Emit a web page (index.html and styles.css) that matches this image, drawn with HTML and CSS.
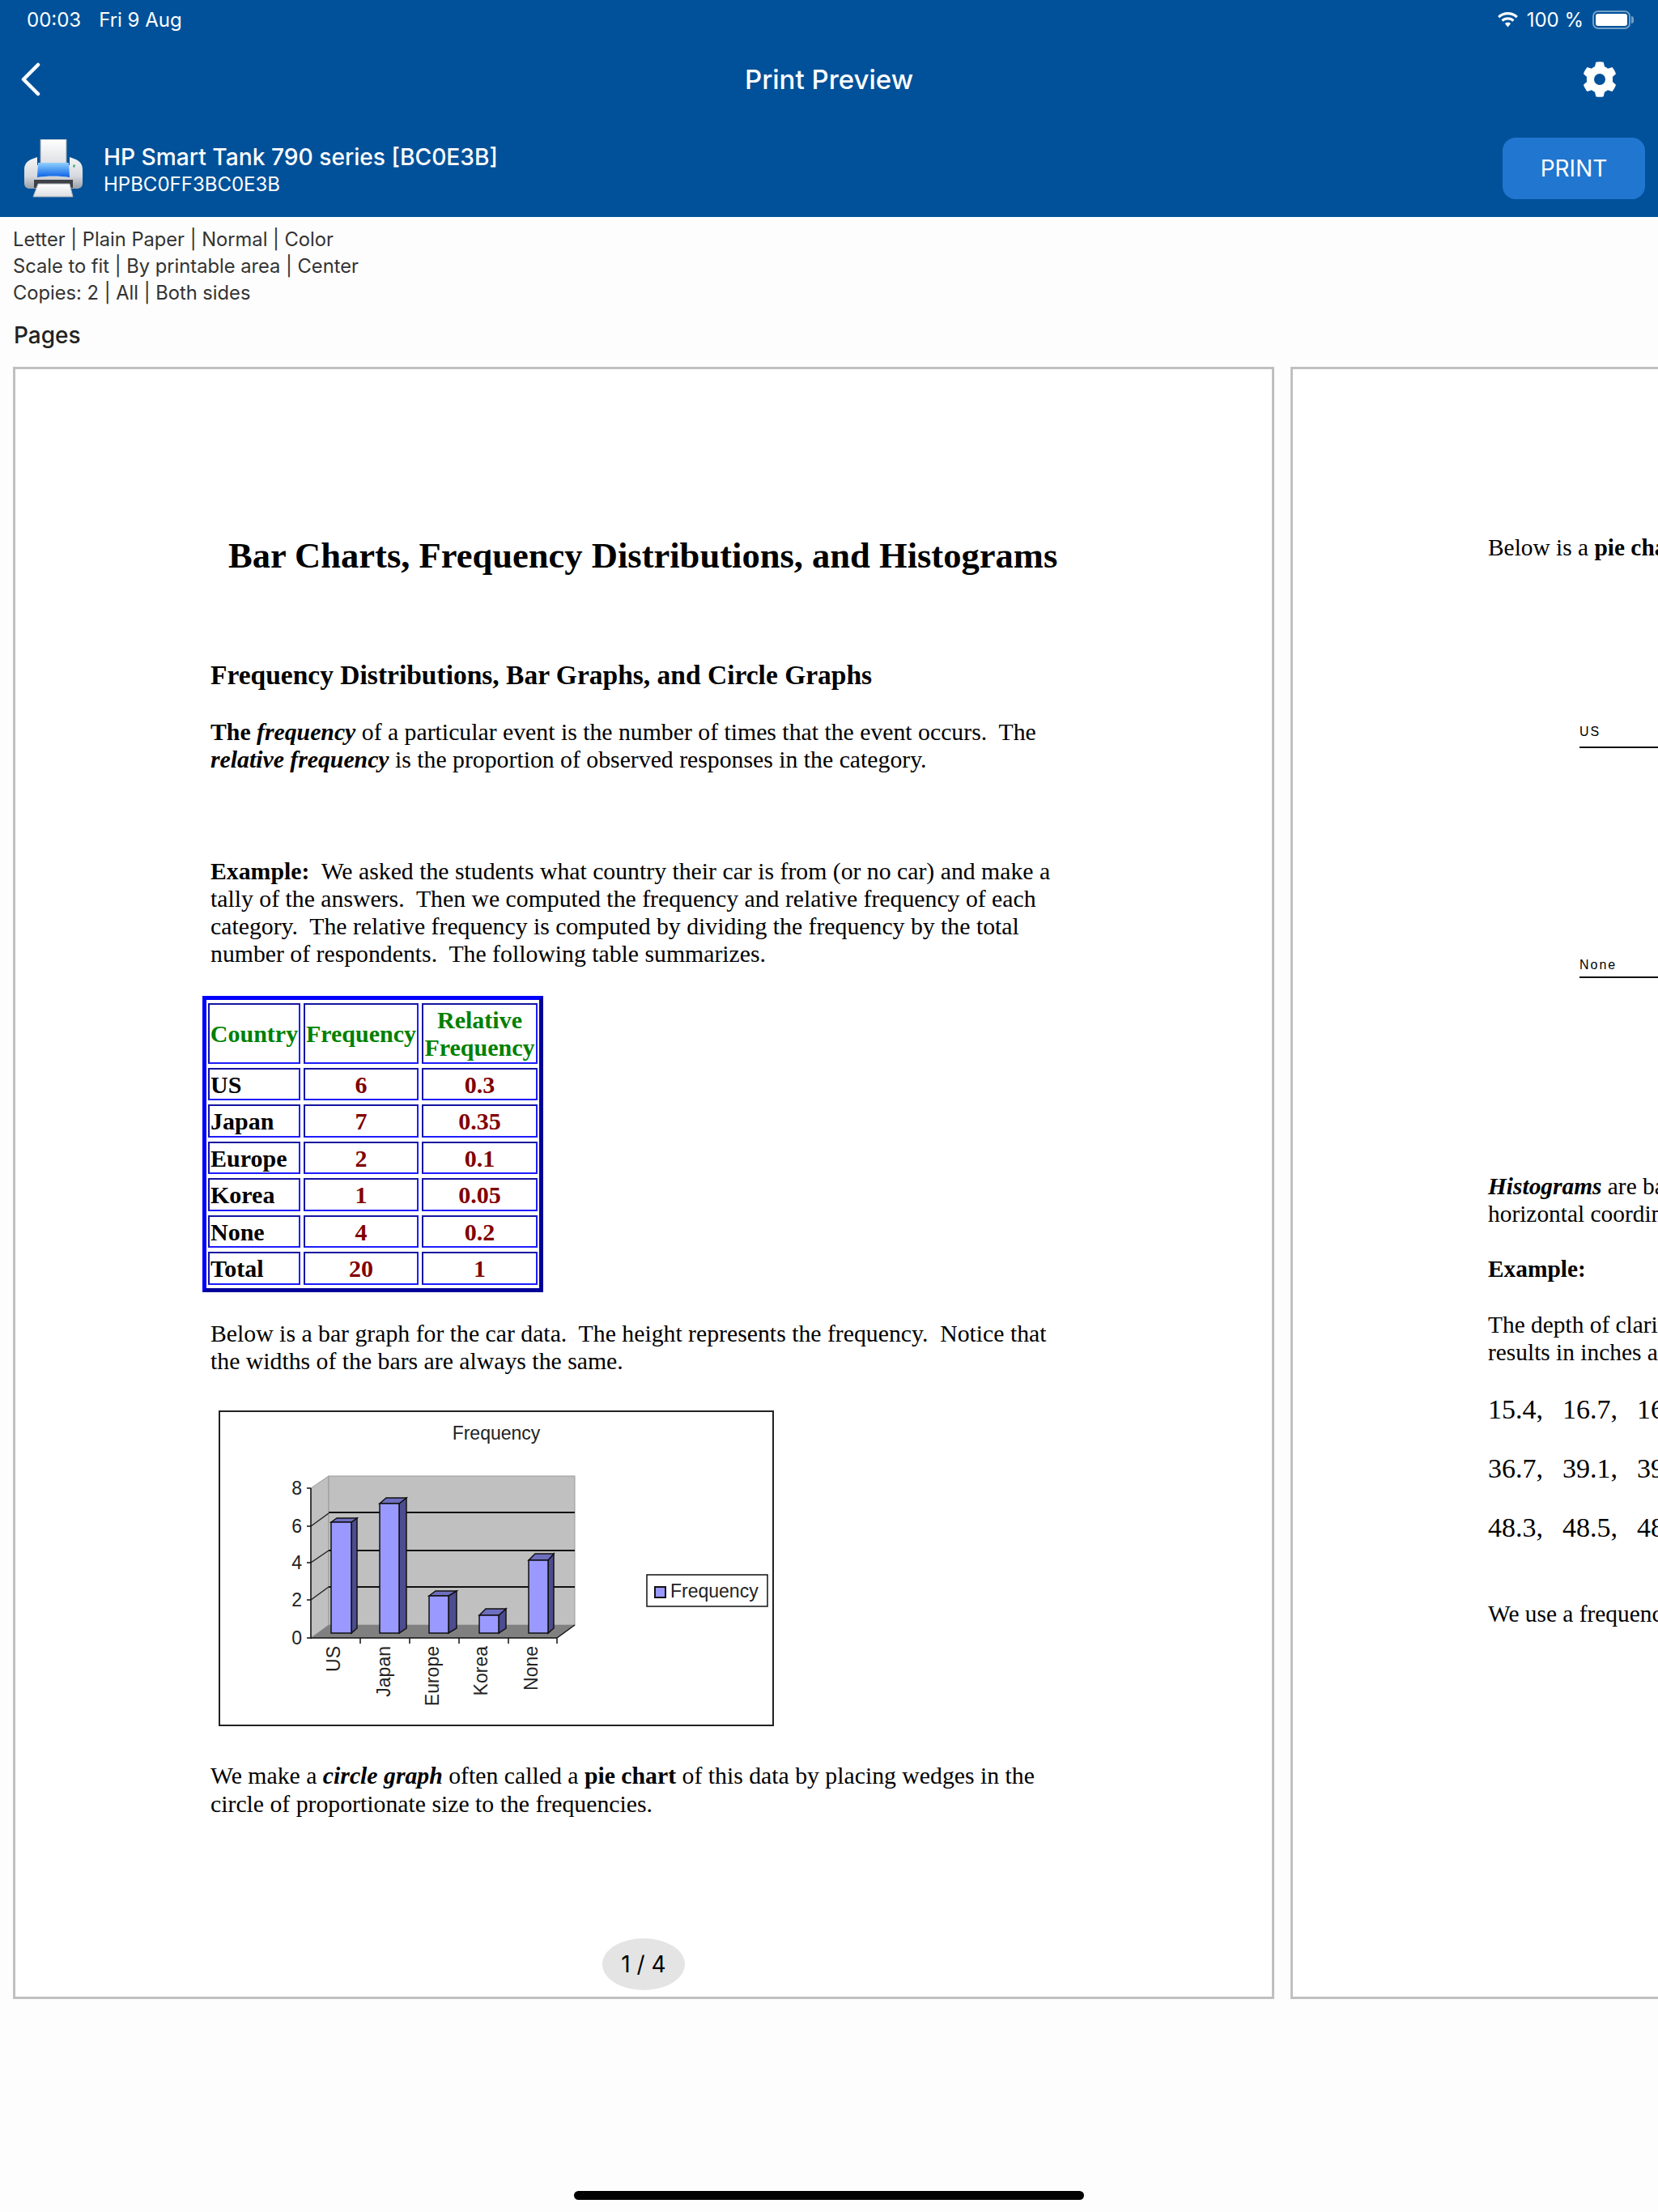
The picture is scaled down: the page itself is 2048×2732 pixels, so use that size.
FILE: index.html
```html
<!DOCTYPE html>
<html lang="en">
<head>
<meta charset="utf-8">
<title>Print Preview</title>
<link rel="stylesheet" href="styles.css">
</head>
<body>
<div class="screen">
  <header class="header">
    <div class="status">
      <div class="status-left"><span>00:03</span><span>Fri 9 Aug</span></div>
      <div class="status-right">
        <svg class="wifi" viewBox="0 0 27 19" width="27" height="19"><path d="M13.5 3.2c3.9 0 7.500 1.500 10.200 4l2.200-2.300C22.600 1.800 18.200 0 13.500 0S4.400 1.800 1.100 4.900l2.200 2.300c2.700-2.500 6.300-4 10.200-4z" fill="#fff"/><path d="M13.500 9.500c2.200 0 4.200.8 5.800 2.200l2.200-2.300c-2.100-2-5-3.100-8-3.100s-5.900 1.100-8 3.100l2.200 2.300c1.600-1.400 3.600-2.200 5.800-2.200z" fill="#fff"/><path d="M13.500 12.700c-1.400 0-2.600.5-3.600 1.400l3.600 4.300 3.600-4.300c-1-.9-2.200-1.400-3.600-1.400z" fill="#fff"/></svg>
        <span>100 %</span>
        <div class="battery"><div class="battery-fill"></div></div>
        <div class="battery-nub"></div>
      </div>
    </div>
    <div class="nav">
      <svg class="back" viewBox="0 0 26 42" width="26" height="42"><path d="M22 3 L4 21 L22 39" fill="none" stroke="#fff" stroke-width="4.500" stroke-linecap="round" stroke-linejoin="round"/></svg>
      <div class="nav-title">Print Preview</div>
      <svg class="gear" viewBox="0 0 40 44" width="40" height="44"><path fill="#fff" fill-rule="evenodd" d="M15.300 0.800 C18 0 22 0 24.700 0.800 L26 6.300 C27.500 6.900 28.800 7.700 30 8.700 L35.400 7 C37.200 9 39.200 12.500 40 15.200 L35.900 19 C36.100 20.800 36.100 23.200 35.900 25 L40 28.800 C39.200 31.500 37.200 35 35.400 37 L30 35.300 C28.800 36.300 27.500 37.100 26 37.700 L24.700 43.200 C22 44 18 44 15.300 43.200 L14 37.700 C12.500 37.100 11.200 36.300 10 35.300 L4.600 37 C2.800 35 0.800 31.500 0 28.800 L4.100 25 C3.900 23.200 3.900 20.800 4.100 19 L0 15.200 C0.800 12.500 2.800 9 4.600 7 L10 8.700 C11.200 7.700 12.500 6.900 14 6.300 Z M20 15 A7 7 0 1 0 20 29 A7 7 0 1 0 20 15 Z"/></svg>
    </div>
    <div class="printer-row">
      <svg class="printer" viewBox="0 0 72 72" width="72" height="72">
        <defs>
          <linearGradient id="body" x1="0" y1="0" x2="0" y2="1"><stop offset="0" stop-color="#f4f5f7"/><stop offset=".6" stop-color="#d6d9de"/><stop offset="1" stop-color="#9aa0a8"/></linearGradient>
          <linearGradient id="glass" x1="0" y1="0" x2="0" y2="1"><stop offset="0" stop-color="#8fd0ff"/><stop offset="1" stop-color="#0a62e6"/></linearGradient>
          <linearGradient id="sheet" x1="0" y1="0" x2="0" y2="1"><stop offset="0" stop-color="#ffffff"/><stop offset="1" stop-color="#dcdee2"/></linearGradient>
        </defs>
        <path d="M20 0H52V32H20Z" fill="url(#sheet)" stroke="#9aa0a8"/>
        <path d="M8 25C2 28 0 32 0 38V54C0 59 3 61 7 61H65C69 61 72 59 72 54V38C72 32 70 28 64 25L56 22V32H16V22Z" fill="url(#body)"/>
        <path d="M17 29H55L56 47C44 45 28 45 16 47Z" fill="url(#glass)"/>
        <path d="M12 50H60V60H12Z" fill="#3d4046"/>
        <path d="M17 55H56L60 71H11Z" fill="url(#sheet)" stroke="#aab0b8"/>
        <path d="M61 31L63 32L62 35L60 34Z" fill="#3aa76a"/>
      </svg>
      <div class="printer-text">
        <div class="printer-name">HP Smart Tank 790 series [BC0E3B]</div>
        <div class="printer-id">HPBC0FF3BC0E3B</div>
      </div>
      <button class="print-btn">PRINT</button>
    </div>
  </header>
  <section class="info">
    <div>Letter | Plain Paper | Normal | Color</div>
    <div>Scale to fit | By printable area | Center</div>
    <div>Copies: 2 | All | Both sides</div>
  </section>
  <div class="pages-label">Pages</div>
  <div class="pages">
    <article class="page page-one">
      <h1 class="doc-title">Bar Charts, Frequency Distributions, and Histograms</h1>
      <h2 class="doc-h2">Frequency Distributions, Bar Graphs, and Circle Graphs</h2>
      <p class="doc-p p-a"><b>The <i>frequency</i></b> of a particular event is the number of times that the event occurs.&nbsp; The<br><b><i>relative frequency</i></b> is the proportion of observed responses in the category.</p>
      <p class="doc-p p-b"><b>Example:</b>&nbsp; We asked the students what country their car is from (or no car) and make a<br>tally of the answers.&nbsp; Then we computed the frequency and relative frequency of each<br>category.&nbsp; The relative frequency is computed by dividing the frequency by the total<br>number of respondents.&nbsp; The following table summarizes.</p>
      <div class="freq-table">
        <div class="cell head">Country</div><div class="cell head">Frequency</div><div class="cell head">Relative<br>Frequency</div>
        <div class="cell name">US</div><div class="cell val">6</div><div class="cell val">0.3</div>
        <div class="cell name">Japan</div><div class="cell val">7</div><div class="cell val">0.35</div>
        <div class="cell name">Europe</div><div class="cell val">2</div><div class="cell val">0.1</div>
        <div class="cell name">Korea</div><div class="cell val">1</div><div class="cell val">0.05</div>
        <div class="cell name">None</div><div class="cell val">4</div><div class="cell val">0.2</div>
        <div class="cell name">Total</div><div class="cell val">20</div><div class="cell val">1</div>
      </div>
      <p class="doc-p p-c">Below is a bar graph for the car data.&nbsp; The height represents the frequency.&nbsp; Notice that<br>the widths of the bars are always the same.</p>
      <svg class="chart" viewBox="270 1742 686 390" width="686" height="390">
        <rect x="271" y="1743" width="684" height="388" fill="#fff" stroke="#222" stroke-width="2"/>
        <text class="ct" x="613" y="1778" text-anchor="middle">Frequency</text>
        <path d="M384 1838L406 1823V2007L384 2023Z" fill="#c0c0c0" stroke="#9a9a9a"/>
        <rect x="406" y="1823" width="304" height="184" fill="#c0c0c0" stroke="#9a9a9a"/>
        <path d="M384 2023L406 2007H710L688 2023Z" fill="#808080"/>
        <path d="M406 1868H710M406 1915H710M406 1960H710" stroke="#111" stroke-width="2"/>
        <path d="M384 1885L406 1869M384 1930L406 1915M384 1976L406 1960" stroke="#222" stroke-width="1.500" fill="none"/>
        <path d="M384 1838V2024M379 1838H384M379 1885H384M379 1930H384M379 1976H384M379 2023H688M445 2023V2030M506 2023V2030M567 2023V2030M628 2023V2030M688 2023V2030M688 2023L710 2007" stroke="#111" stroke-width="1.500" fill="none"/>
        <g class="bars">
          <path class="bar-side" d="M434 1880L441 1875V2011L434 2017Z"/><path class="bar-top" d="M409 1880L416 1875H441L434 1880Z"/><rect class="bar-front" x="409" y="1880" width="25" height="137"/>
          <path class="bar-side" d="M493 1857L502 1850V2011L493 2017Z"/><path class="bar-top" d="M469 1857L477 1850H502L493 1857Z"/><rect class="bar-front" x="469" y="1857" width="24" height="160"/>
          <path class="bar-side" d="M554 1971L564 1965V2011L554 2017Z"/><path class="bar-top" d="M530 1971L538 1965H564L554 1971Z"/><rect class="bar-front" x="530" y="1971" width="24" height="46"/>
          <path class="bar-side" d="M616 1995L625 1987V2011L616 2017Z"/><path class="bar-top" d="M592 1995L600 1987H625L616 1995Z"/><rect class="bar-front" x="592" y="1995" width="24" height="22"/>
          <path class="bar-side" d="M677 1927L684 1919V2011L677 2017Z"/><path class="bar-top" d="M653 1927L661 1919H684L677 1927Z"/><rect class="bar-front" x="653" y="1927" width="24" height="90"/>
        </g>
        <g class="ct">
          <text x="373" y="1846" text-anchor="end">8</text>
          <text x="373" y="1893" text-anchor="end">6</text>
          <text x="373" y="1938" text-anchor="end">4</text>
          <text x="373" y="1984" text-anchor="end">2</text>
          <text x="373" y="2031" text-anchor="end">0</text>
          <text transform="translate(420 2033) rotate(-90)" text-anchor="end">US</text>
          <text transform="translate(482 2033) rotate(-90)" text-anchor="end">Japan</text>
          <text transform="translate(542 2033) rotate(-90)" text-anchor="end">Europe</text>
          <text transform="translate(602 2033) rotate(-90)" text-anchor="end">Korea</text>
          <text transform="translate(664 2033) rotate(-90)" text-anchor="end">None</text>
        </g>
        <rect x="799" y="1945" width="149" height="39" fill="#fff" stroke="#111" stroke-width="1.500"/>
        <rect x="809" y="1960" width="13" height="13" fill="#9999ff" stroke="#111" stroke-width="2"/>
        <text class="ct" x="828" y="1973">Frequency</text>
      </svg>
      <p class="doc-p p-d">We make a <b><i>circle graph</i></b> often called a <b>pie chart</b> of this data by placing wedges in the<br>circle of proportionate size to the frequencies.</p>
      <div class="badge">1 / 4</div>
    </article>
    <article class="page page-two">
      <p class="doc-p t-a">Below is a <b>pie chart</b></p>
      <div class="pie-label pl-us">US</div>
      <div class="pie-label pl-none">None</div>
      <p class="doc-p t-b"><b><i>Histograms</i></b> are bars<br>horizontal coordinate</p>
      <p class="doc-p t-c"><b>Example:</b></p>
      <p class="doc-p t-d">The depth of clarity<br>results in inches and</p>
      <div class="nums n-a"><span>15.4,</span><span>16.7,</span><span>16</span></div>
      <div class="nums n-b"><span>36.7,</span><span>39.1,</span><span>39</span></div>
      <div class="nums n-c"><span>48.3,</span><span>48.5,</span><span>48</span></div>
      <p class="doc-p t-e">We use a frequency</p>
    </article>
  </div>
  <div class="home-bar"></div>
</div>
</body>
</html>
```

FILE: styles.css
```css
* { box-sizing: border-box; }
html, body { margin: 0; padding: 0; }
body { background: #fdfdfd; font-family: Inter, "Liberation Sans", sans-serif; }
.screen { position: relative; width: 2048px; height: 2732px; overflow: hidden; display: flex; flex-direction: column; }

.header { height: 268px; background: #00519a; color: #fff; flex: none; }
.status { height: 48px; display: flex; justify-content: space-between; align-items: center; padding: 0 30px 0 33px; font-size: 24px; }
.status-left { display: flex; gap: 22px; }
.status-right { display: flex; align-items: center; }
.wifi { margin-right: 10px; }
.battery { width: 47px; height: 23px; margin-left: 11px; border: 2px solid rgba(255,255,255,.45); border-radius: 7px; padding: 2px; }
.battery-fill { width: 100%; height: 100%; background: #fff; border-radius: 3px; }
.battery-nub { width: 3px; height: 9px; margin-left: 1px; background: rgba(255,255,255,.45); border-radius: 0 3px 3px 0; }

.nav { position: relative; height: 100px; display: flex; align-items: center; justify-content: space-between; padding: 0 52px 0 25px; }
.nav-title { position: absolute; left: 0; right: 0; text-align: center; font-size: 33px; font-weight: 500; }
.printer-row { height: 120px; display: flex; align-items: center; padding: 0 16px 0 30px; }
.printer { flex: none; margin-right: 26px; }
.printer-text { flex: 1; padding-top: 3px; }
.printer-name { font-size: 28.200px; font-weight: 500; line-height: 36px; }
.printer-id { font-size: 24px; line-height: 32px; font-weight: 400; }
.print-btn { width: 176px; height: 76px; border: 0; border-radius: 16px; background: #2176cf; color: #fff; font: 400 28px Inter, "Liberation Sans", sans-serif; }

.info { padding: 11px 16px 0; font-size: 23.700px; line-height: 33px; color: #333; flex: none; }
.pages-label { padding: 18px 17px 0; font-size: 28px; font-weight: 500; line-height: 36px; color: #222; flex: none; }
.pages { display: flex; gap: 20px; padding: 21px 0 0 16px; width: 2048px; overflow: hidden; flex: none; }
.page { position: relative; flex: none; width: 1558px; height: 2016px; background: #fff; border: 3px solid #c0c0c0; font-family: "Liberation Serif", serif; color: #000; }
.page-one { padding: 205px 0 0 241px; }
.page-two { width: 1200px; border-right: 0; }

.doc-title { margin: 0 0 0 22px; font-size: 44.550px; line-height: 50px; font-weight: 700; white-space: nowrap; }
.doc-h2 { margin: 103px 0 0; font-size: 33.500px; line-height: 40px; font-weight: 700; white-space: nowrap; }
.doc-p { margin: 0; font-size: 29.750px; line-height: 34.300px; white-space: nowrap; }
.p-a { margin-top: 33px; }
.p-b { margin-top: 103px; }
.p-c { margin-top: 34px; }
.p-d { margin-top: 44px; }

.freq-table { margin: 34px 0 0 -10px; width: 421px; display: grid; grid-template-columns: 114px 142px 143px; grid-template-rows: 75px repeat(6, 40.500px); gap: 5px 4px; padding: 4px 2px; border: 5px solid; border-color: #0000ff #000099 #000099 #0000ff; font-size: 30px; line-height: 34px; font-weight: 700; }
.cell { border: 2px solid; border-color: #1414a0 #1c1cff #1c1cff #1414a0; display: flex; align-items: center; justify-content: center; text-align: center; padding-top: 1px; }
.head { color: #008000; padding: 2px 1px 0; }
.name { justify-content: flex-start; padding-left: 1px; }
.val { color: #800000; }

.chart { display: block; margin: 44px 0 0 10px; }
.ct, .ct text { font-family: "Liberation Sans", sans-serif; font-size: 23px; fill: #222; }
.bar-front { fill: #9999ff; stroke: #111; stroke-width: 1.500; }
.bar-side { fill: #4c4c8f; stroke: #111; stroke-width: 1.500; }
.bar-top { fill: #6e6ec0; stroke: #111; stroke-width: 1.500; }

.badge { position: absolute; left: 725px; top: 1938px; width: 102px; height: 64px; border-radius: 51px / 32px; background: #e4e4e4; color: #000; font: 400 28px/64px Inter, "Liberation Sans", sans-serif; text-align: center; }

.page-two .doc-p { font-size: 29.400px; }
.t-a { position: absolute; top: 203px; left: 241px; }
.pie-label { position: absolute; left: 354px; width: 400px; height: 24px; font-family: "Liberation Sans", sans-serif; font-size: 16px; letter-spacing: 2px; border-bottom: 2px solid #111; }
.pl-us { top: 444px; line-height: 8px; }
.pl-none { top: 728px; line-height: 16px; }
.t-b { position: absolute; top: 992px; left: 241px; }
.t-c { position: absolute; top: 1094px; left: 241px; }
.t-d { position: absolute; top: 1163px; left: 241px; }
.nums { position: absolute; left: 241px; display: flex; font-size: 34px; line-height: 40px; white-space: nowrap; }
.nums span { width: 92px; flex: none; }
.n-a { top: 1265px; }
.n-b { top: 1338px; }
.n-c { top: 1411px; }
.t-e { position: absolute; top: 1520px; left: 241px; }

.home-bar { position: absolute; left: 709px; top: 2706px; width: 630px; height: 11px; border-radius: 6px; background: #000; }
```
